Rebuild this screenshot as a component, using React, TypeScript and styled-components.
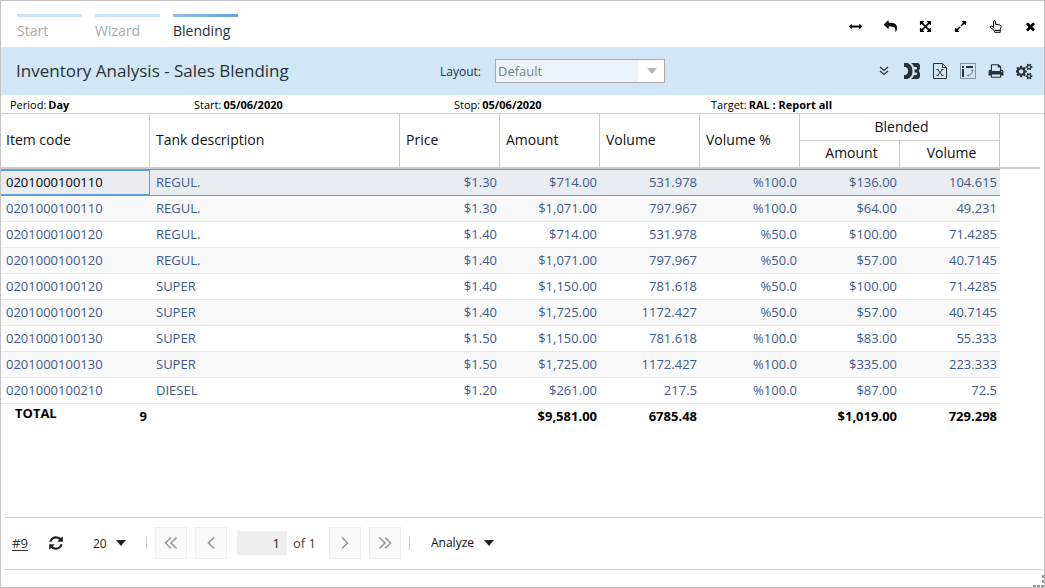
import React from 'react';
import styled, { createGlobalStyle, css } from 'styled-components';

const GlobalStyle = createGlobalStyle`
  *, *::before, *::after { box-sizing: border-box; }
  body {
    margin: 0;
    background: #fff;
    color: #111;
    font-family: 'Open Sans', 'Liberation Sans', sans-serif;
    font-size: 13px;
  }
  button, input, select { font: inherit; color: inherit; }
`;

const Window = styled.div`
  position: relative;
  display: flex;
  flex-direction: column;
  min-height: 100vh;
  border: 1px solid #c3c3c3;
`;

const TopBar = styled.header`
  display: flex;
  justify-content: space-between;
  height: 46px;
  padding: 0 1px 0 16px;
`;

const Tabs = styled.nav`
  display: flex;
  gap: 13px;
  padding-top: 13px;
`;

const Tab = styled.a<{ $active?: boolean }>`
  width: 65px;
  height: 30px;
  padding-top: 7px;
  font-size: 14px;
  line-height: 20px;
  text-decoration: none;
  color: ${(p) => (p.$active ? '#263238' : '#a9aaab')};
  background: linear-gradient(90deg, ${(p) => (p.$active ? '#8fc1ec, #62a2de' : '#cbe5f8, #cbe5f8')}) 0 0 / 100% 3px no-repeat;
  ${(p) => p.$active && css`font-weight: 500;`}
`;

const WindowTools = styled.div`
  display: flex;
  align-items: center;
  gap: 9px;
  padding-top: 4px;
  color: #000;
`;

const IconButton = styled.button<{ $width: number }>`
  display: flex;
  align-items: center;
  justify-content: center;
  width: ${(p) => p.$width}px;
  height: 28px;
  padding: 0;
  border: 0;
  background: none;
  color: inherit;
`;

const TitleBar = styled.div`
  display: flex;
  align-items: center;
  height: 48px;
  padding: 0 6px 0 15px;
  background: #d1e6f6;
  color: #263238;
`;

const Title = styled.h1`
  flex: 0 0 424px;
  margin: 0;
  font-size: 17px;
  font-weight: 400;
  line-height: 24px;
`;

const LayoutLabel = styled.label`
  width: 55px;
  font-size: 12px;
`;

const LayoutField = styled.div`
  position: relative;
  width: 170px;
  height: 24px;
`;

const LayoutSelect = styled.select`
  appearance: none;
  width: 100%;
  height: 100%;
  padding: 0 28px 0 2px;
  border: 1px solid #a9a9a9;
  border-radius: 0;
  background: linear-gradient(#fff, #fff) right / 26px 100% no-repeat #ebf4fb;
  color: #75808a;
  opacity: 1;
`;

const SelectCaret = styled.svg<{ $right: number }>`
  position: absolute;
  top: 50%;
  right: ${(p) => p.$right}px;
  transform: translateY(-50%);
  pointer-events: none;
`;

const ReportTools = styled.div`
  display: flex;
  margin-left: auto;
`;

const Criteria = styled.dl`
  display: grid;
  grid-template-columns: 184px 260px 257px 1fr;
  height: 18px;
  margin: 0;
  padding-left: 9px;
  font-size: 11px;
  line-height: 20px;
  color: #000;
`;

const Criterion = styled.div`
  display: flex;
  gap: 2px;
  white-space: nowrap;
  dt, dd { margin: 0; }
  dd { font-weight: 700; }
`;

const TableArea = styled.main`
  flex: 1;
  border-top: 1px solid #ccc;
  padding-right: 4px;
`;

const Table = styled.table`
  width: 100%;
  table-layout: fixed;
  border-collapse: separate;
  border-spacing: 0;
`;

const HeadCell = styled.th<{ $center?: boolean; $last?: boolean; $upper?: boolean }>`
  padding: ${(p) => (p.$center ? '0 4px 0 8px' : '0 6px')};
  padding-bottom: ${(p) => (p.$upper ? 0 : 2)}px;
  border-right: 1px solid #ccc;
  border-bottom: ${(p) => (p.$upper ? '1px' : '2px')} solid #ccc;
  font-size: 14px;
  font-weight: 400;
  line-height: 20px;
  text-align: ${(p) => (p.$center ? 'center' : 'left')};
  color: #111;
  &:first-child:not([colspan]):not(:nth-last-child(2)) { padding-left: 5px; }
  ${(p) => p.$last && css`border-right: 0;`}
`;

const HeadRow = styled.tr<{ $height: number }>`
  height: ${(p) => p.$height}px;
`;

const Cell = styled.td<{ $right?: boolean }>`
  height: 26px;
  padding: 0 3px 2px 6px;
  border-bottom: 1px solid #e8e8e8;
  line-height: 20px;
  text-align: ${(p) => (p.$right ? 'right' : 'left')};
  color: #405a8c;
  white-space: nowrap;
  &:first-child { padding-left: 5px; }
`;

const BodyRow = styled.tr<{ $selected?: boolean }>`
  &:nth-child(even) ${Cell} { background: #f9f9f9; }
  ${(p) => p.$selected && css`
    ${Cell} {
      height: 27px;
      background: #e9ecf1;
      border-top: 1px solid #5b9fdb;
      border-bottom: 1px solid #5b9fdb;
    }
    ${Cell}:first-child {
      color: #000;
      border-width: 2px 1px 2px 0;
      border-style: solid;
      border-color: #5b9fdb;
    }
  `}
`;

const TotalCell = styled.td`
  height: 26px;
  padding: 2px 3px 0 6px;
  font-weight: 700;
  line-height: 20px;
  text-align: right;
  vertical-align: top;
  color: #000;
  &:first-child { padding-top: 0; }
`;

const TotalLabel = styled.div`
  display: flex;
  justify-content: space-between;
  padding-left: 8px;
  line-height: 18px;
  span:last-child { padding-top: 3px; }
`;

const Footer = styled.footer`
  display: flex;
  align-items: center;
  height: 53px;
  margin: 0 1px 17px 4px;
  padding: 0 0 2px 7px;
  border-top: 1px solid #ccc;
  border-bottom: 1px solid #ccc;
  color: #222;
`;

const RecordLink = styled.a`
  width: 31px;
  color: #333;
  text-underline-offset: 2px;
`;

const PageSize = styled.div`
  position: relative;
  width: 42px;
  margin: 0 5px 0 22px;
`;

const PageSizeSelect = styled.select`
  appearance: none;
  width: 100%;
  padding: 0 0 0 2px;
  border: 0;
  background: none;
  font-size: 12px;
`;

const Divider = styled.span`
  width: 1px;
  height: 14px;
  margin: 0 8px;
  background: #ccc;
`;

const PagerGroup = styled.div`
  display: flex;
  gap: 8px;
`;

const PagerButton = styled.button`
  display: flex;
  align-items: center;
  justify-content: center;
  width: 32px;
  height: 32px;
  padding: 0;
  border: 1px solid #eee;
  background: #fafafa;
  color: #999;
`;

const PageInput = styled.input`
  width: 50px;
  height: 24px;
  margin-left: 10px;
  padding: 0 7px;
  border: 0;
  background: #efefef;
  text-align: right;
`;

const PageCount = styled.span`
  width: 36px;
  margin-left: 6px;
  color: #444;
`;

const AnalyzeButton = styled.button`
  display: flex;
  align-items: center;
  gap: 10px;
  margin-left: 13px;
  padding: 0;
  border: 0;
  background: none;
  font-size: 12px;
  color: #111;
`;

const Grip = styled.svg`
  position: absolute;
  right: 0;
  bottom: 0;
`;

const paths = {
  horizontal:
    'M1792 896q0 26-19 45l-256 256q-19 19-45 19t-45-19-19-45v-128h-1024v128q0 26-19 45t-45 19-45-19l-256-256q-19-19-19-45t19-45l256-256q19-19 45-19t45 19 19 45v128h1024v-128q0-26 19-45t45-19 45 19l256 256q19 19 19 45z',
  reply:
    'M1792 1120q0 166-127 451-3 7-10.5 24t-13.5 30-13 22q-12 17-28 17-15 0-23.5-10t-8.5-25q0-9 2.5-26.5t2.5-23.5q5-68 5-123 0-101-17.5-181t-48.5-138.5-80-101-105.5-69.5-133-42.5-154-21.5-175.5-6h-224v256q0 26-19 45t-45 19-45-19l-512-512q-19-19-19-45t19-45l512-512q19-19 45-19t45 19 19 45v256h224q713 0 875 403 53 134 53 333z',
  arrows:
    'M1411 541l-355 355 355 355 144-144q29-31 70-14 39 17 39 59v448q0 26-19 45t-45 19h-448q-42 0-59-40-17-39 14-69l144-144-355-355-355 355 144 144q31 30 14 69-17 40-59 40h-448q-26 0-45-19t-19-45v-448q0-42 40-59 39-17 69 14l144 144 355-355-355-355-144 144q-19 19-45 19-12 0-24-5-40-17-40-59v-448q0-26 19-45t45-19h448q42 0 59 40 17 39-14 69l-144 144 355 355 355-355-144-144q-31-30-14-69 17-40 59-40h448q26 0 45 19t19 45v448q0 42-39 59-13 5-25 5-26 0-45-19z',
  expand:
    'M883 1056q0 13-10 23l-332 332 144 144q19 19 19 45t-19 45-45 19h-448q-26 0-45-19t-19-45v-448q0-26 19-45t45-19 45 19l144 144 332-332q10-10 23-10t23 10l114 114q10 10 10 23zm781-864v448q0 26-19 45t-45 19-45-19l-144-144-332 332q-10 10-23 10t-23-10l-114-114q-10-10-10-23t10-23l332-332-144-144q-19-19-19-45t19-45 45-19h448q26 0 45 19t19 45z',
  close:
    'M1490 1322q0 40-28 68l-136 136q-28 28-68 28t-68-28l-294-294-294 294q-28 28-68 28t-68-28l-136-136q-28-28-28-68t28-68l294-294-294-294q-28-28-28-68t28-68l136-136q28-28 68-28t68 28l294 294 294-294q28-28 68-28t68 28l136 136q28 28 28 68t-28 68l-294 294 294 294q28 28 28 68z',
  refresh:
    'M1511 1056q0 5-1 7-64 268-268 434.5t-478 166.5q-146 0-282.5-55t-243.5-157l-129 129q-19 19-45 19t-45-19-19-45v-448q0-26 19-45t45-19h448q26 0 45 19t19 45-19 45l-137 137q71 66 161 102t187 36q134 0 250-65t186-179q11-17 53-117 8-23 30-23h192q13 0 22.5 9.5t9.5 22.5zm25-800v448q0 26-19 45t-45 19h-448q-26 0-45-19t-19-45 19-45l138-138q-148-137-349-137-134 0-250 65t-186 179q-11 17-53 117-8 23-30 23h-199q-13 0-22.5-9.5t-9.5-22.5v-7q65-268 270-434.5t480-166.5q146 0 284 55.5t245 156.5l130-129q19-19 45-19t45 19 19 45z',
  print:
    'M448 1536h896v-256h-896v256zm0-640h896v-384h-160q-40 0-68-28t-28-68v-160h-640v640zm1152 64q0-26-19-45t-45-19-45 19-19 45 19 45 45 19 45-19 19-45zm128 0v416q0 13-9.5 22.5t-22.5 9.5h-224v160q0 40-28 68t-68 28h-960q-40 0-68-28t-28-68v-160h-224q-13 0-22.5-9.5t-9.5-22.5v-416q0-79 56.5-135.5t135.5-56.5h64v-544q0-40 28-68t68-28h672q40 0 88 20t76 48l152 152q28 28 48 76t20 88v256h64q79 0 135.5 56.5t56.5 135.5z',
  cogs:
    'M832 896q0-106-75-181t-181-75-181 75-75 181 75 181 181 75 181-75 75-181zm768 512q0-52-38-90t-90-38-90 38-38 90q0 53 37.5 90.5t90.5 37.5 90.5-37.5 37.5-90.5zm0-1024q0-52-38-90t-90-38-90 38-38 90q0 53 37.5 90.5t90.5 37.5 90.5-37.5 37.5-90.5zm-384 421v185q0 10-7 19.5t-16 10.5l-155 24q-11 35-32 76 34 48 90 115 7 11 7 20 0 12-7 19-23 30-82.5 89.5t-78.5 59.5q-11 0-21-7l-115-90q-37 19-77 31-11 108-23 155-7 24-30 24h-186q-11 0-20-7.5t-10-17.5l-23-153q-34-10-75-31l-118 89q-7 7-20 7-11 0-21-8-144-133-144-160 0-9 7-19 10-14 41-53t47-61q-23-44-35-82l-152-24q-10-1-17-9.5t-7-19.5v-185q0-10 7-19.5t16-10.5l155-24q11-35 32-76-34-48-90-115-7-11-7-20 0-12 7-20 22-30 82-89t79-59q11 0 21 7l115 90q34-18 77-32 11-108 23-154 7-24 30-24h186q11 0 20 7.5t10 17.5l23 153q34 10 75 31l118-89q8-7 20-7 11 0 21 8 144 133 144 160 0 9-7 19-12 16-42 54t-45 60q23 48 34 82l152 23q10 2 17 10.5t7 19.5zm640 533v140q0 16-149 31-12 27-30 52 51 113 51 138 0 4-4 7-122 71-124 71-8 0-46-47t-52-68q-20 2-30 2t-30-2q-14 21-52 68t-46 47q-2 0-124-71-4-3-4-7 0-25 51-138-18-25-30-52-149-15-149-31v-140q0-16 149-31 13-29 30-52-51-113-51-138 0-4 4-7 4-2 35-20t59-34 30-16q8 0 46 46.5t52 67.5q20-2 30-2t30 2q51-71 92-112l6-2q4 0 124 70 4 3 4 7 0 25-51 138 17 23 30 52 149 15 149 31zm0-1024v140q0 16-149 31-12 27-30 52 51 113 51 138 0 4-4 7-122 71-124 71-8 0-46-47t-52-68q-20 2-30 2t-30-2q-14 21-52 68t-46 47q-2 0-124-71-4-3-4-7 0-25 51-138-18-25-30-52-149-15-149-31v-140q0-16 149-31 13-29 30-52-51-113-51-138 0-4 4-7 4-2 35-20t59-34 30-16q8 0 46 46.5t52 67.5q20-2 30-2t30 2q51-71 92-112l6-2q4 0 124 70 4 3 4 7 0 25-51 138 17 23 30 52 149 15 149 31z',
};

const Glyph = ({ name, size, box = 1792 }: { name: keyof typeof paths; size: number; box?: number }) => (
  <svg width={size} height={size} viewBox={`0 0 ${box} 1792`} fill="currentColor" aria-hidden="true">
    <path d={paths[name]} />
  </svg>
);

const HandIcon = () => (
  <svg width="13" height="13" viewBox="0 0 13 13" fill="none" stroke="currentColor" strokeWidth="1" strokeLinejoin="round" aria-hidden="true">
    <path d="M4.5 7.5V1.8q0-1.2 1-1.2t1 1.2v2.4l4.3.8q1.2.3 1.2 1.4 0 1.6-.8 3v2.9H5.6V10.8L1.6 7.7Q.8 6.9 1.5 6.2T3 6.1z" />
    <path d="M5.6 10.4h5.5" />
  </svg>
);

const DoubleDownIcon = () => (
  <svg width="10" height="10" viewBox="0 0 10 10" fill="none" stroke="currentColor" strokeWidth="1.2" aria-hidden="true">
    <path d="M1 1l4 3.5L9 1M1 5l4 3.5L9 5" />
  </svg>
);

const DbIcon = () => (
  <svg width="16" height="16" viewBox="0 0 16 16" fill="currentColor" aria-hidden="true">
    <path d="M0 0h3.500Q8.500 2 8.500 8T3.500 16H0v-4h1.500Q4 11.500 4 8T1.500 4H0z" />
    <path d="M7 0h7q2 .5 2 3v2.500L14.800 8 16 10.500V13q0 2.500-2 3H7q2.300-1.500 3-4h2q1 0 1-1.200T12 9.500h-1.500v-3H12q1 0 1-1.200T12 4h-2Q9.300 1.500 7 0z" />
  </svg>
);

const ExcelIcon = () => (
  <svg width="14" height="16" viewBox="0 0 14 16" fill="none" stroke="currentColor" strokeWidth="1" aria-hidden="true">
    <path d="M.5.5h8.800l4.200 4.200v10.800H.5z" />
    <path d="M9.500.5v4h4" />
    <path d="M4.500 6.500l5 6M9.500 6.500l-5 6M3.500 6.500h2.200M8.300 6.500h2.200M3.500 12.500h2.200M8.300 12.500h2.200" />
  </svg>
);

const PivotIcon = () => (
  <svg width="16" height="16" viewBox="0 0 16 16" fill="none" aria-hidden="true">
    <rect x=".5" y=".5" width="15" height="15" stroke="#7f95a6" />
    <path d="M2 3h2v2H2zM6 3h7v2H6zM2 6h2v8H2z" fill="currentColor" />
    <path d="M12.500 7q0 5-5 5.500M11.500 8l1-1.200 1 1.200M8.500 11.500l-1.200 1 1.200 1" stroke="#50616d" strokeWidth=".8" />
  </svg>
);

const CaretShape = ({ width = 10, height = 6, fill = '#1d2429' }: { width?: number; height?: number; fill?: string }) => (
  <svg width={width} height={height} viewBox="0 0 10 6" aria-hidden="true">
    <path d="M0 0h10L5 6z" fill={fill} />
  </svg>
);

const Chevron = ({ double, flip }: { double?: boolean; flip?: boolean }) => (
  <svg width="14" height="14" viewBox="0 0 14 14" fill="none" stroke="currentColor" strokeWidth="1.6" aria-hidden="true">
    <g transform={flip ? 'translate(14 0) scale(-1 1)' : undefined}>
      {double ? <path d="M7 1.500L1.500 7 7 12.500M12.500 1.500L7 7l5.500 5.500" /> : <path d="M10 1.500L4.500 7l5.500 5.500" />}
    </g>
  </svg>
);

const criteria = [
  ['Period:', 'Day'],
  ['Start:', '05/06/2020'],
  ['Stop:', '05/06/2020'],
  ['Target:', 'RAL : Report all'],
];

const rows = [
  ['0201000100110', 'REGUL.', '$1.30', '$714.00', '531.978', '%100.0', '$136.00', '104.615'],
  ['0201000100110', 'REGUL.', '$1.30', '$1,071.00', '797.967', '%100.0', '$64.00', '49.231'],
  ['0201000100120', 'REGUL.', '$1.40', '$714.00', '531.978', '%50.0', '$100.00', '71.4285'],
  ['0201000100120', 'REGUL.', '$1.40', '$1,071.00', '797.967', '%50.0', '$57.00', '40.7145'],
  ['0201000100120', 'SUPER', '$1.40', '$1,150.00', '781.618', '%50.0', '$100.00', '71.4285'],
  ['0201000100120', 'SUPER', '$1.40', '$1,725.00', '1172.427', '%50.0', '$57.00', '40.7145'],
  ['0201000100130', 'SUPER', '$1.50', '$1,150.00', '781.618', '%100.0', '$83.00', '55.333'],
  ['0201000100130', 'SUPER', '$1.50', '$1,725.00', '1172.427', '%100.0', '$335.00', '223.333'],
  ['0201000100210', 'DIESEL', '$1.20', '$261.00', '217.5', '%100.0', '$87.00', '72.5'],
];

const columnWidths = [149, 250, 100, 100, 100, 100, 100, 100];
const plainHeads = ['Item code', 'Tank description', 'Price', 'Amount', 'Volume', 'Volume %'];
const totals = ['', '', '$9,581.00', '6785.48', '', '$1,019.00', '729.298'];

export default function App() {
  return (
    <>
      <GlobalStyle />
      <Window>
        <TopBar>
          <Tabs>
            <Tab href="#start">Start</Tab>
            <Tab href="#wizard">Wizard</Tab>
            <Tab href="#blending" $active aria-current="page">Blending</Tab>
          </Tabs>
          <WindowTools>
            <IconButton $width={26} aria-label="Fit width"><Glyph name="horizontal" size={13} /></IconButton>
            <IconButton $width={26} aria-label="Back"><Glyph name="reply" size={13} /></IconButton>
            <IconButton $width={26} aria-label="Full screen"><Glyph name="arrows" size={13} /></IconButton>
            <IconButton $width={26} aria-label="Expand"><Glyph name="expand" size={13} /></IconButton>
            <IconButton $width={26} aria-label="Touch mode"><HandIcon /></IconButton>
            <IconButton $width={26} aria-label="Close"><Glyph name="close" size={13} /></IconButton>
          </WindowTools>
        </TopBar>

        <TitleBar>
          <Title>Inventory Analysis - Sales Blending</Title>
          <LayoutLabel htmlFor="layout">Layout:</LayoutLabel>
          <LayoutField>
            <LayoutSelect id="layout" disabled>
              <option>Default</option>
            </LayoutSelect>
            <SelectCaret $right={8} width="10" height="6" viewBox="0 0 10 6" aria-hidden="true">
              <path d="M0 0h10L5 6z" fill="#b5b5b5" />
            </SelectCaret>
          </LayoutField>
          <ReportTools>
            <IconButton $width={28} aria-label="More"><DoubleDownIcon /></IconButton>
            <IconButton $width={28} aria-label="Database"><DbIcon /></IconButton>
            <IconButton $width={28} aria-label="Export to Excel"><ExcelIcon /></IconButton>
            <IconButton $width={28} aria-label="Pivot"><PivotIcon /></IconButton>
            <IconButton $width={28} aria-label="Print"><Glyph name="print" size={16} /></IconButton>
            <IconButton $width={28} aria-label="Settings"><Glyph name="cogs" size={17} box={1920} /></IconButton>
          </ReportTools>
        </TitleBar>

        <Criteria>
          {criteria.map(([label, value]) => (
            <Criterion key={label}>
              <dt>{label}</dt>
              <dd>{value}</dd>
            </Criterion>
          ))}
        </Criteria>

        <TableArea>
          <Table>
            <colgroup>
              {columnWidths.map((width, i) => <col key={i} width={width} />)}
              <col />
            </colgroup>
            <thead>
              <HeadRow $height={27}>
                {plainHeads.map((head) => <HeadCell key={head} rowSpan={2}>{head}</HeadCell>)}
                <HeadCell colSpan={2} $center $upper>Blended</HeadCell>
                <HeadCell as="td" rowSpan={2} $last />
              </HeadRow>
              <HeadRow $height={28}>
                <HeadCell $center>Amount</HeadCell>
                <HeadCell $center>Volume</HeadCell>
              </HeadRow>
            </thead>
            <tbody>
              {rows.map((row, r) => (
                <BodyRow key={r} $selected={r === 0}>
                  {row.map((value, c) => <Cell key={c} $right={c > 1}>{value}</Cell>)}
                </BodyRow>
              ))}
            </tbody>
            <tfoot>
              <tr>
                <TotalCell>
                  <TotalLabel><span>TOTAL</span><span>9</span></TotalLabel>
                </TotalCell>
                {totals.map((value, i) => <TotalCell key={i}>{value}</TotalCell>)}
              </tr>
            </tfoot>
          </Table>
        </TableArea>

        <Footer>
          <RecordLink href="#records">#9</RecordLink>
          <IconButton $width={26} aria-label="Refresh"><Glyph name="refresh" size={16} box={1536} /></IconButton>
          <PageSize>
            <PageSizeSelect aria-label="Rows per page" defaultValue="20">
              <option>20</option>
              <option>50</option>
            </PageSizeSelect>
            <SelectCaret $right={7} width="10" height="6" viewBox="0 0 10 6" aria-hidden="true">
              <path d="M0 0h10L5 6z" fill="#1d2429" />
            </SelectCaret>
          </PageSize>
          <Divider />
          <PagerGroup>
            <PagerButton aria-label="First page"><Chevron double /></PagerButton>
            <PagerButton aria-label="Previous page"><Chevron /></PagerButton>
          </PagerGroup>
          <PageInput aria-label="Page" defaultValue="1" />
          <PageCount>of 1</PageCount>
          <PagerGroup>
            <PagerButton aria-label="Next page"><Chevron flip /></PagerButton>
            <PagerButton aria-label="Last page"><Chevron double flip /></PagerButton>
          </PagerGroup>
          <Divider />
          <AnalyzeButton>Analyze<CaretShape /></AnalyzeButton>
        </Footer>
        <Grip width="11" height="12" viewBox="0 0 11 12" aria-hidden="true">
          <path d="M9 0h2v3H9zM9 5h2v3H9zM0 10h3v2H0zM4 10h3v2H4zM8 10h3v2H8z" fill="#a39488" />
        </Grip>
      </Window>
    </>
  );
}
